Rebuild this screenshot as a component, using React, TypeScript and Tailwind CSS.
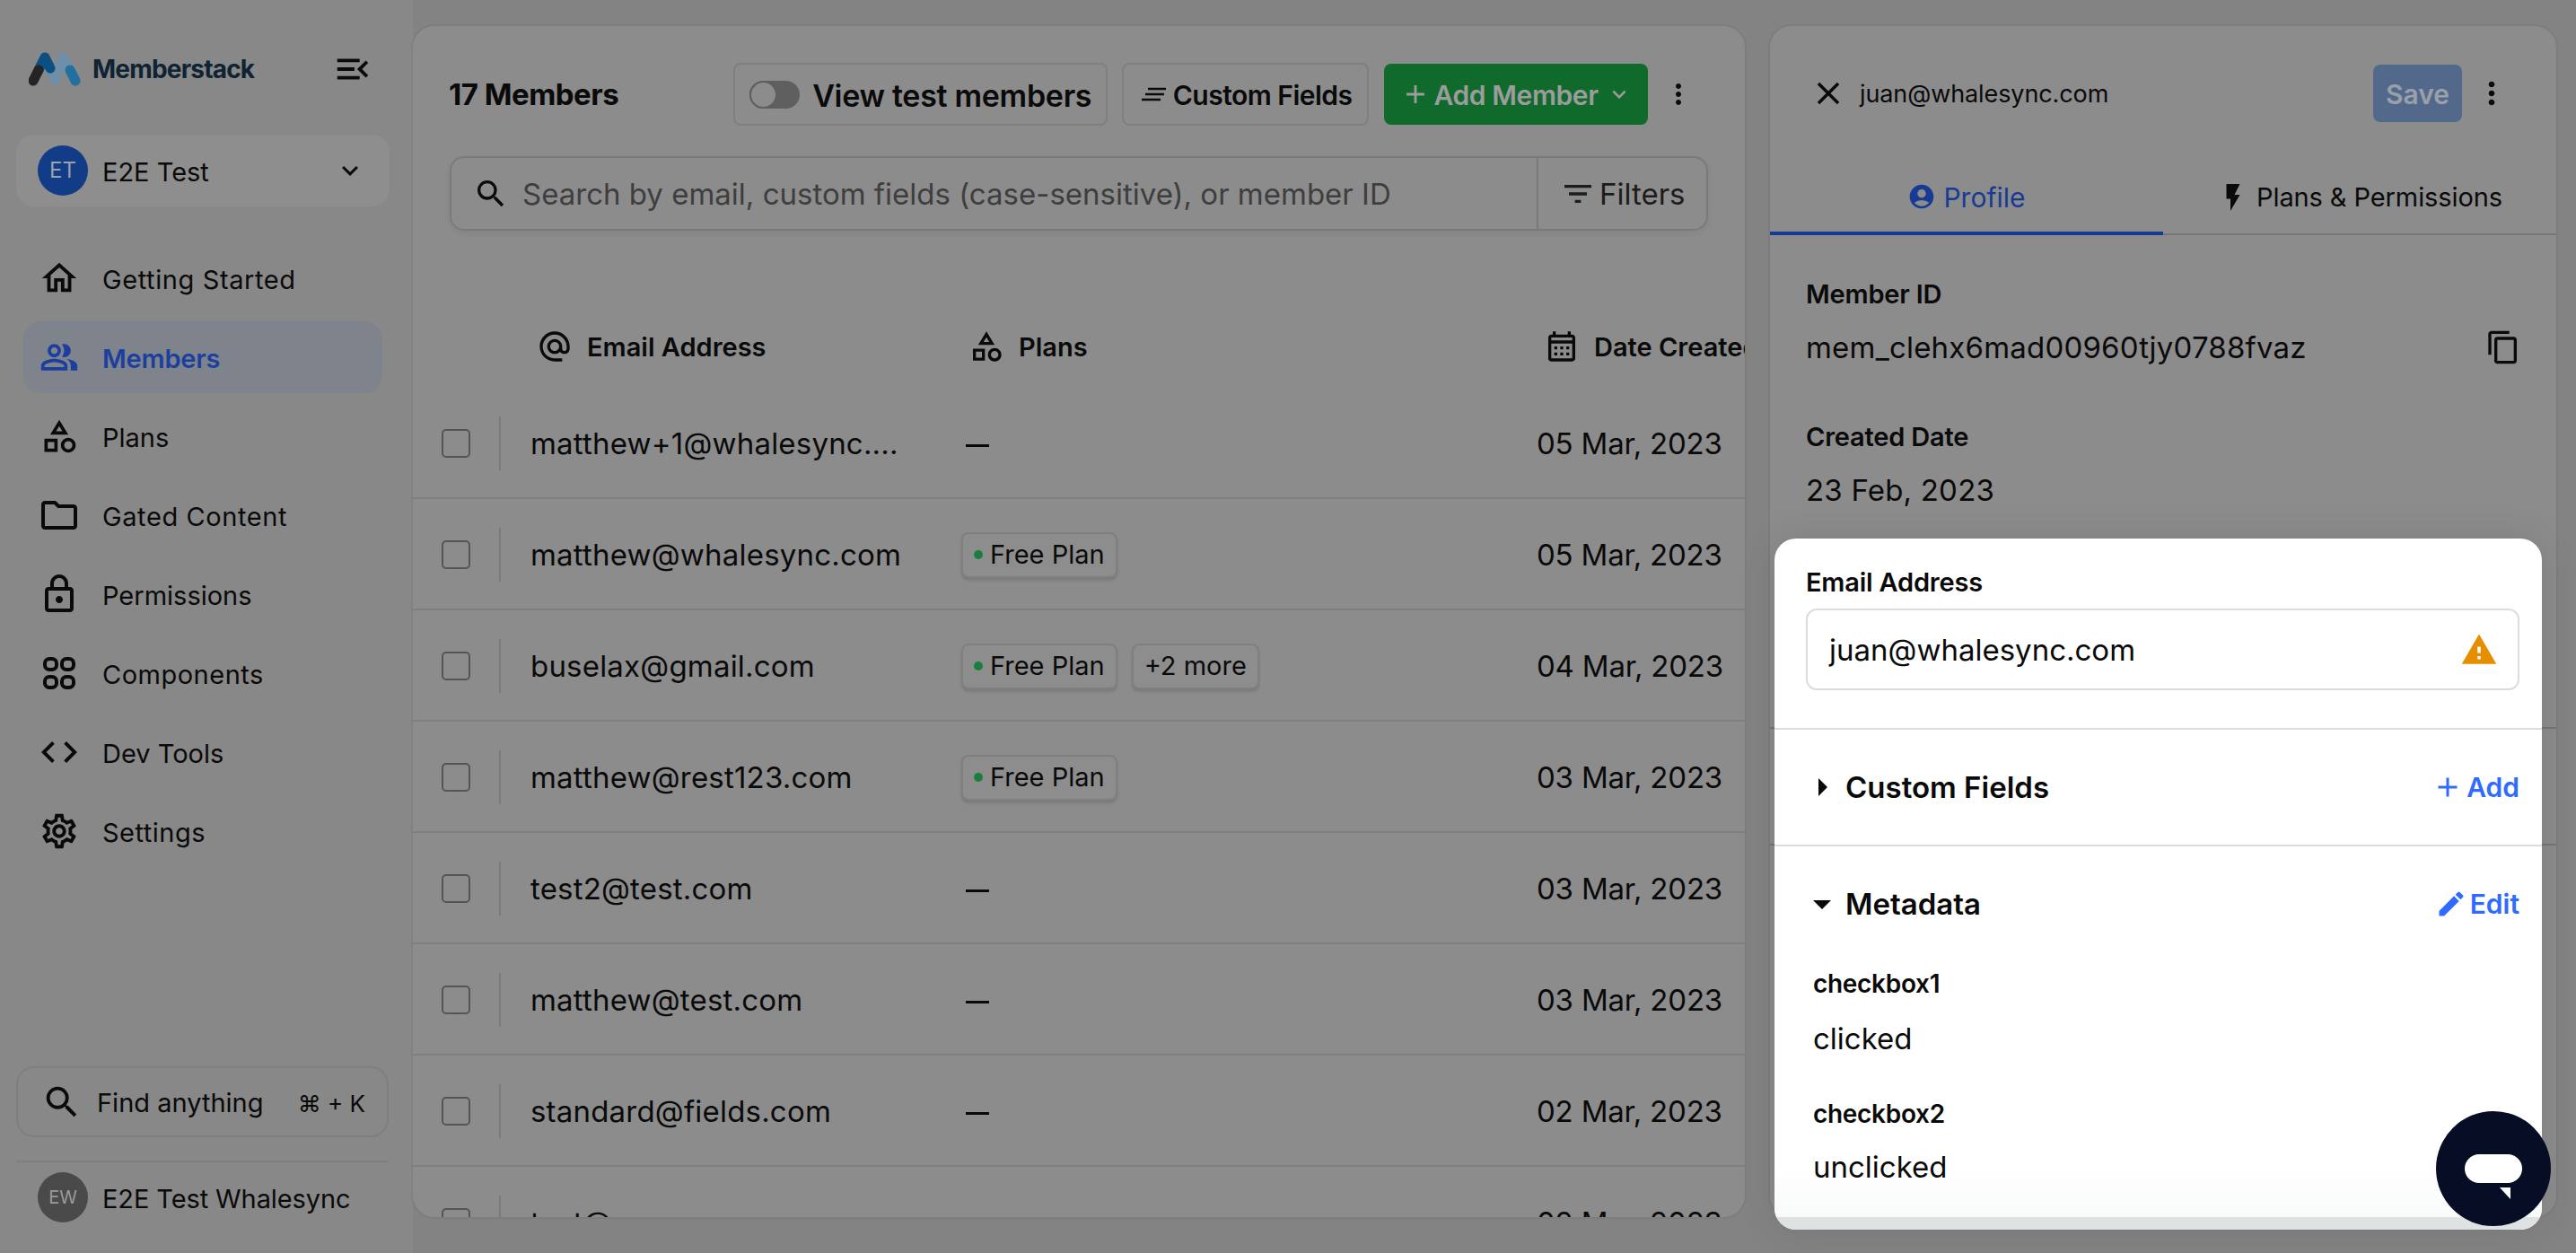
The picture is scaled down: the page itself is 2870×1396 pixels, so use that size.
import * as React from 'react'
import {
  MdOutlineHome,
  MdOutlinePeopleAlt,
  MdOutlineCategory,
  MdOutlineFolder,
  MdOutlineLock,
  MdCode,
  MdOutlineSettings,
  MdSearch,
  MdAlternateEmail,
  MdOutlineCalendarMonth,
  MdFilterList,
  MdAdd,
  MdMoreVert,
  MdClose,
  MdAccountCircle,
  MdFlashOn,
  MdContentCopy,
  MdWarning,
  MdArrowRight,
  MdArrowDropDown,
  MdEdit,
  MdMenuOpen,
  MdKeyboardArrowDown,
} from 'react-icons/md'

const ComponentsIcon = () => (
  <svg width="40" height="40" viewBox="0 0 40 40" fill="none" stroke="currentColor" strokeWidth="4">
    <rect x="4" y="4" width="13" height="12" rx="5" />
    <rect x="23" y="4" width="13" height="12" rx="5" />
    <rect x="4" y="24" width="13" height="12" rx="5" />
    <rect x="23" y="24" width="13" height="12" rx="5" />
  </svg>
)

const Logo = () => (
  <svg width="60" height="42" viewBox="0 0 60 42" fill="none" strokeLinecap="round" strokeWidth="11">
    <path d="M18 8 L29 33 L39 8 L52 34" stroke="#6f8fa8" strokeLinejoin="round" />
    <path d="M46 22 L52 34" stroke="#22709f" />
    <path d="M11 22 L18 8 L24 20" stroke="#0b4f83" strokeLinejoin="round" />
    <path d="M5 34 L11 22" stroke="#242424" />
  </svg>
)

const CustomFieldsIcon = () => (
  <svg width="28" height="16" viewBox="0 0 28 16" fill="none" stroke="#0a0a0a" strokeWidth="2.4">
    <path d="M8 2 H28 M5 8 H26 M1 14 H22" />
  </svg>
)

const nav = [
  { label: 'Getting Started', icon: <MdOutlineHome size={46} />, text: 'ml-[8px] pt-[3px] text-[29px] tracking-[0.6px]' },
  { label: 'Members', icon: <MdOutlinePeopleAlt size={44} />, active: true, text: 'ml-[8px] pt-[3px] text-[29px] font-semibold tracking-[-0.2px]' },
  { label: 'Plans', icon: <MdOutlineCategory size={44} />, text: 'ml-[8px] pt-[3px] text-[29px]' },
  { label: 'Gated Content', icon: <MdOutlineFolder size={48} />, text: 'ml-[8px] pt-[3px] text-[29px] tracking-[0.6px]' },
  { label: 'Permissions', icon: <MdOutlineLock size={48} />, text: 'ml-[8px] pt-[3px] text-[29px]' },
  { label: 'Components', icon: <ComponentsIcon />, text: 'ml-[8px] pt-[3px] text-[29px] tracking-[0.5px]' },
  { label: 'Dev Tools', icon: <MdCode size={48} />, text: 'ml-[8px] pt-[3px] text-[29px]' },
  { label: 'Settings', icon: <MdOutlineSettings size={46} />, text: 'ml-[8px] pt-[3px] text-[29px] tracking-[0.5px]' },
]

const rows = [
  { email: 'matthew+1@whalesync....', plans: 0, date: '05 Mar, 2023' },
  { email: 'matthew@whalesync.com', plans: 1, date: '05 Mar, 2023' },
  { email: 'buselax@gmail.com', plans: 2, date: '04 Mar, 2023' },
  { email: 'matthew@rest123.com', plans: 1, date: '03 Mar, 2023' },
  { email: 'test2@test.com', plans: 0, date: '03 Mar, 2023' },
  { email: 'matthew@test.com', plans: 0, date: '03 Mar, 2023' },
  { email: 'standard@fields.com', plans: 0, date: '02 Mar, 2023' },
  { email: 'test@', plans: 0, date: '02 Mar, 2023' },
]

const Badge = ({ children }: { children: React.ReactNode }) => (
  <span className="flex h-[51px] items-center rounded-[8px] border-2 border-[#7f7f7f] bg-[#8d8d8d] px-[12px] text-[29px] text-[#0a0a0a] shadow-[0_3px_3px_rgba(0,0,0,0.12)]">
    {children}
  </span>
)

const Sidebar = () => (
  <aside className="flex h-full w-[460px] shrink-0 flex-col pb-[34px] pt-[57px]">
    <div className="flex h-[40px] items-center pl-[32px] pr-[44px]">
      <Logo />
      <span className="ml-[11px] text-[28px] font-bold tracking-[-0.8px] text-[#0f2333]">Memberstack</span>
      <MdMenuOpen size={46} className="ml-auto text-[#0a0a0a]" />
    </div>
    <div className="ml-[18px] mt-[53px] flex h-[80px] w-[416px] items-center rounded-[20px] bg-[#8e8e8e] pl-[24px] pr-[26px]">
      <span className="flex h-[56px] w-[56px] items-center justify-center rounded-full bg-[#123c85] text-[24px] text-[#9aa3ad]">
        ET
      </span>
      <span className="ml-[16px] pt-[3px] text-[29px] text-[#0a0a0a]">E2E Test</span>
      <MdKeyboardArrowDown size={36} className="ml-auto text-[#0a0a0a]" />
    </div>
    <nav className="ml-[26px] mt-[40px] flex w-[400px] flex-col gap-[8px]">
      {nav.map((n) => (
        <div
          key={n.label}
          className={
            n.active
              ? 'flex h-[80px] items-center rounded-[20px] bg-[#7e838c] text-[#1c3f9e]'
              : 'flex h-[80px] items-center rounded-[20px] text-[#0a0a0a]'
          }
        >
          <span className="flex w-[80px] justify-center">{n.icon}</span>
          <span className={n.text}>{n.label}</span>
        </div>
      ))}
    </nav>
    <div className="ml-[18px] mt-auto flex h-[79px] w-[415px] items-center rounded-[20px] border-2 border-[#7f7f7f] pl-[26px] pr-[24px] text-[#0a0a0a]">
      <MdSearch size={46} />
      <span className="ml-[16px] pt-[3px] text-[29px]">Find anything</span>
      <span className="ml-auto pt-[3px] text-[26px]">⌘ + K</span>
    </div>
    <div className="ml-[18px] mt-[26px] h-[2px] w-[415px] bg-[#7f7f7f]" />
    <div className="ml-[42px] mt-[11px] flex items-center">
      <span className="flex h-[56px] w-[56px] items-center justify-center rounded-full bg-[#4a4a4a] text-[20px] text-[#9a9a9a]">
        EW
      </span>
      <span className="ml-[16px] pt-[3px] text-[29px] tracking-[-0.1px] text-[#0a0a0a]">E2E Test Whalesync</span>
    </div>
  </aside>
)

const Members = () => (
  <section className="h-[1327px] w-[1484px] shrink-0 overflow-hidden rounded-[24px] bg-[#8c8c8c] pt-[41px] shadow-[0_0_0_2px_rgba(0,0,0,0.04)]">
    <div className="flex items-center pl-[40px] pr-[34px] text-[#0a0a0a]">
      <span className="pt-[2px] text-[33px] font-bold tracking-[-0.5px]">17 Members</span>
      <div className="ml-[128px] flex h-[70px] w-[417px] items-center rounded-[8px] border-2 border-[#7f7f7f] pl-[16px]">
        <span className="relative h-[31px] w-[56px] rounded-full bg-[#5f5f5f]">
          <span className="absolute left-0 top-0 h-[31px] w-[31px] rounded-full border-2 border-[#5f5f5f] bg-[#8c8c8c]" />
        </span>
        <span className="ml-[14px] pt-[2px] text-[34px] font-semibold tracking-[-0.3px]">View test members</span>
      </div>
      <div className="ml-[16px] flex h-[70px] w-[275px] items-center justify-center gap-[8px] rounded-[8px] border-2 border-[#7f7f7f] pl-[2px] text-[30px] font-semibold tracking-[-0.5px]">
        <CustomFieldsIcon />
        <span className="pt-[2px]">Custom Fields</span>
      </div>
      <div className="ml-[17px] flex h-[68px] w-[294px] items-center justify-center rounded-[8px] bg-[#106a2c] text-[30px] font-semibold tracking-[-0.4px] text-[#9c9c9c]">
        <MdAdd size={34} />
        <span className="ml-[4px] pt-[2px]">Add Member</span>
        <MdKeyboardArrowDown size={30} className="ml-[8px]" />
      </div>
      <MdMoreVert size={36} className="ml-[16px]" />
    </div>
    <div className="ml-[41px] mt-[34px] flex h-[83px] w-[1402px] items-center rounded-[16px] border-2 border-[#7a7a7a] shadow-[0_3px_6px_rgba(0,0,0,0.06)]">
      <div className="flex h-full w-[1211px] items-center border-r-2 border-[#7a7a7a] pl-[24px]">
        <MdSearch size={40} className="text-[#0a0a0a]" />
        <span className="ml-[15px] pt-[3px] text-[33px] text-[#3e3e3e]">
          Search by email, custom fields (case-sensitive), or member ID
        </span>
      </div>
      <div className="flex items-center pl-[24px] text-[33px] text-[#1c1c1c]">
        <MdFilterList size={40} />
        <span className="ml-[4px] pt-[3px]">Filters</span>
      </div>
    </div>
    <div className="mt-[83px] flex h-[92px] items-center text-[29px] font-semibold text-[#0a0a0a]">
      <div className="flex w-[619px] shrink-0 items-center pl-[138px]">
        <MdAlternateEmail size={40} />
        <span className="ml-[16px] pt-[2px]">Email Address</span>
      </div>
      <div className="flex w-[641px] shrink-0 items-center">
        <MdOutlineCategory size={40} />
        <span className="ml-[16px] pt-[2px]">Plans</span>
      </div>
      <div className="flex shrink-0 items-center whitespace-nowrap">
        <MdOutlineCalendarMonth size={40} />
        <span className="ml-[16px] pt-[2px]">Date Created</span>
      </div>
    </div>
    {rows.map((r) => (
      <div key={r.email} className="flex h-[124px] items-center border-b-2 border-[#7f7f7f] pt-[2px] text-[#0a0a0a]">
        <div className="flex w-[32px] shrink-0" />
        <span className="h-[32px] w-[32px] shrink-0 rounded-[5px] border-2 border-[#555555]" />
        <span className="ml-[32px] h-[60px] w-[2px] shrink-0 bg-[#7a7a7a]" />
        <span className="ml-[33px] w-[480px] shrink-0 pt-[2px] text-[33px] tracking-[0.2px]">{r.email}</span>
        <div className="flex w-[641px] shrink-0 items-center gap-[16px]">
          {r.plans === 0 && <span className="ml-[5px] mt-[5px] h-[3px] w-[26px] bg-[#0a0a0a]" />}
          {r.plans > 0 && (
            <Badge>
              <span className="mr-[8px] h-[10px] w-[10px] rounded-full bg-[#1a7f3c]" />
              Free Plan
            </Badge>
          )}
          {r.plans === 2 && <Badge>+2 more</Badge>}
        </div>
        <span className="whitespace-nowrap pt-[2px] text-[33px] tracking-[-0.2px]">{r.date}</span>
      </div>
    ))}
  </section>
)

const Field = ({ label, value, className }: { label: string; value: string; className: string }) => (
  <div className={className}>
    <div className="text-[29px] font-semibold leading-[40px] tracking-[-0.2px] text-[#0a0a0a]">{label}</div>
    <div className="mt-[19px] text-[33px] leading-[40px] tracking-[0.2px] text-[#0a0a0a]">{value}</div>
  </div>
)

const EmailCard = () => (
  <div className="absolute left-[5px] top-[571px] h-[770px] w-[855px] overflow-hidden rounded-[24px] bg-white text-[#0a0a0a] shadow-[0_0_40px_rgba(0,0,0,0.1)]">
    <div className="absolute bottom-[14px] left-0 right-0 h-[60px] bg-gradient-to-b from-white to-[#f9fafa]" />
    <div className="absolute bottom-0 left-0 right-0 h-[14px] bg-[#dfe2e3]" />
    <div className="relative">
      <div className="pl-[35px] pr-[25px] pt-[29px]">
        <div className="text-[29px] font-semibold leading-[40px] tracking-[-0.2px]">Email Address</div>
        <div className="mt-[9px] flex h-[91px] items-center rounded-[12px] border-2 border-[#dcdcdc] pl-[24px] pr-[24px]">
          <span className="pt-[2px] text-[33px]">juan@whalesync.com</span>
          <MdWarning size={42} className="ml-auto translate-x-[2px] text-[#e58e00]" />
        </div>
      </div>
      <div className="mt-[42px] h-[2px] bg-[#dcdcdc]" />
      <div className="flex h-[128px] items-center pl-[36px] pr-[25px]">
        <MdArrowRight size={48} className="ml-[-7px]" />
        <span className="ml-[2px] pt-[2px] text-[33px] font-semibold">Custom Fields</span>
        <span className="ml-auto flex items-center text-[30px] font-semibold text-[#2f6bff]">
          <MdAdd size={36} />
          <span className="ml-[3px]">Add</span>
        </span>
      </div>
      <div className="h-[2px] bg-[#dcdcdc]" />
      <div className="flex h-[128px] items-center pl-[36px] pr-[25px]">
        <MdArrowDropDown size={48} className="ml-[-7px]" />
        <span className="ml-[2px] pt-[2px] text-[33px] font-semibold">Metadata</span>
        <span className="ml-auto flex items-center text-[30px] font-semibold text-[#2f6bff]">
          <MdEdit size={36} />
          <span className="ml-[3px]">Edit</span>
        </span>
      </div>
      <div className="pl-[43px] pt-[5px]">
        <div className="text-[28px] font-semibold leading-[40px] tracking-[-0.3px]">checkbox1</div>
        <div className="mt-[21px] text-[33px] leading-[40px]">clicked</div>
        <div className="mt-[44px] text-[28px] font-semibold leading-[40px] tracking-[-0.3px]">checkbox2</div>
        <div className="mt-[19px] text-[33px] leading-[40px]">unclicked</div>
      </div>
    </div>
  </div>
)

const Detail = () => (
  <section className="relative h-[1327px] w-[876px] shrink-0 rounded-[24px] bg-[#8c8c8c] pt-[43px] text-[#0a0a0a] shadow-[0_0_0_2px_rgba(0,0,0,0.04)]">
    <div className="flex h-[64px] items-center pl-[44px] pr-[52px]">
      <MdClose size={42} />
      <span className="ml-[14px] pt-[2px] text-[27px] tracking-[-0.1px]">juan@whalesync.com</span>
      <span className="ml-auto flex h-[64px] w-[99px] items-center justify-center rounded-[8px] bg-[#52698c] pt-[2px] text-[30px] font-semibold text-[#9aa0a8]">
        Save
      </span>
      <MdMoreVert size={40} className="ml-[13px]" />
    </div>
    <div className="mt-[44px] flex h-[82px] border-b-2 border-[#757575]">
      <div className="flex h-[82px] w-[438px] items-center justify-center border-b-4 border-[#173a94] text-[#173a94]">
        <MdAccountCircle size={32} />
        <span className="ml-[8px] pt-[2px] text-[30px]">Profile</span>
      </div>
      <div className="flex flex-1 items-center justify-center">
        <MdFlashOn size={36} />
        <span className="ml-[8px] text-[29px] tracking-[-0.1px]">Plans &amp; Permissions</span>
      </div>
    </div>
    <Field label="Member ID" value="mem_clehx6mad00960tjy0788fvaz" className="ml-[40px] mt-[46px]" />
    <MdContentCopy size={40} className="absolute left-[797px] top-[338px]" />
    <Field label="Created Date" value="23 Feb, 2023" className="ml-[40px] mt-[60px]" />
    <div className="mt-[244px] h-[2px] bg-[#757575]" />
    <div className="mt-[128px] h-[2px] bg-[#757575]" />
    <EmailCard />
  </section>
)

export default function App() {
  return (
    <div className="relative flex h-[1396px] w-[2870px] overflow-hidden bg-[#838383] font-['Inter',sans-serif]">
      <div className="absolute inset-y-0 left-0 w-[460px] bg-[#888888]" />
      <div className="relative z-10 flex h-full">
        <Sidebar />
        <div className="flex gap-[28px] pt-[29px]">
          <Members />
          <Detail />
        </div>
      </div>
      <div className="absolute left-[2714px] top-[1238px] z-20 flex h-[128px] w-[128px] items-center justify-center rounded-full bg-[#070d24]">
        <span className="relative h-[32px] w-[64px] rounded-[16px] bg-white">
          <svg width="12" height="13" viewBox="0 0 12 13" className="absolute left-[39px] top-[37px]">
            <path d="M0 0 H12 V13 Z" fill="white" />
          </svg>
        </span>
      </div>
    </div>
  )
}
